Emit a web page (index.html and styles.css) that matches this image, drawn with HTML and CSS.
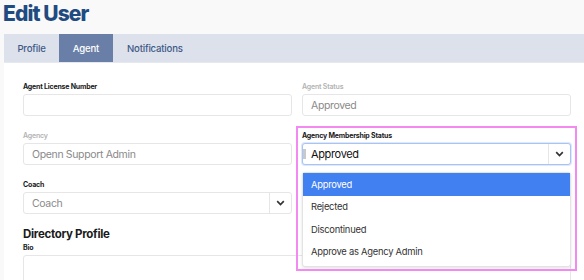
FILE: index.html
```html
<!DOCTYPE html>
<html>
<head>
<meta charset="utf-8">
<link rel="stylesheet" href="styles.css">
</head>
<body>
<h1 class="title">Edit User</h1>
<div class="tabs">
  <div class="tab">Profile</div>
  <div class="tab active">Agent</div>
  <div class="tab">Notifications</div>
</div>
<div class="panel">
  <div class="grid">
    <div class="field">
      <div class="label">Agent License Number</div>
      <div class="input"></div>
    </div>
    <div class="field">
      <div class="label disabled">Agent Status</div>
      <div class="input muted">Approved</div>
    </div>
    <div class="field">
      <div class="label disabled">Agency</div>
      <div class="input muted">Openn Support Admin</div>
    </div>
    <div class="field focus-field">
      <div class="label">Agency Membership Status</div>
      <div class="select focused">
        <span class="handle"></span>
        <span class="value">Approved</span>
        <span class="arrow"><svg width="9" height="6" viewBox="0 0 9 6"><path d="M1.2 1.2l3.3 3.3 3.3-3.3" fill="none" stroke="#333" stroke-width="1.7"/></svg></span>
      </div>
      <div class="menu">
        <div class="opt sel">Approved</div>
        <div class="opt">Rejected</div>
        <div class="opt">Discontinued</div>
        <div class="opt">Approve as Agency Admin</div>
      </div>
      <div class="highlight"></div>
    </div>
    <div class="field">
      <div class="label">Coach</div>
      <div class="select">
        <span class="value muted">Coach</span>
        <span class="arrow"><svg width="9" height="6" viewBox="0 0 9 6"><path d="M1.2 1.2l3.3 3.3 3.3-3.3" fill="none" stroke="#333" stroke-width="1.7"/></svg></span>
      </div>
    </div>
    <div class="field"></div>
  </div>
  <h2 class="section">Directory Profile</h2>
  <div class="label">Bio</div>
  <div class="textarea"></div>
</div>
</body>
</html>
```

FILE: styles.css
```css
* { box-sizing: border-box; }
html, body { margin: 0; padding: 0; }
body {
  width: 584px;
  height: 280px;
  overflow: hidden;
  background: #f9f9f9;
  font-family: Inter, "Noto Sans", sans-serif;
  color: #222;
}
.title {
  margin: 0;
  padding: 1px 0 0 3px;
  height: 34px;
  font-size: 21px;
  line-height: 26px;
  font-weight: 800;
  color: #1f4b80;
  letter-spacing: -0.9px;
}
.tabs {
  margin-left: 4px;
  height: 29px;
  background: #dde1ec;
  border-bottom: 1px solid #e6e8ef;
  display: flex;
}
.tab {
  height: 28px;
  padding: 0 14px;
  display: flex;
  align-items: center;
  font-size: 9.6px;
  letter-spacing: -0.2px;
  font-weight: 500;
  color: #3d5a86;
}
.tab.active {
  background: #6a7fa7;
  color: #fff;
  width: 54px;
  justify-content: center;
}
.tab:first-child { width: 55px; justify-content: center; }
.panel {
  margin-left: 4px;
  background: #fff;
  padding: 19px 13px 0 19px;
  height: 240px;
  overflow: hidden;
}
.grid {
  display: grid;
  grid-template-columns: 269px 269px;
  column-gap: 10px;
  row-gap: 15px;
}
.field { position: relative; }
.label {
  font-size: 7px;
  letter-spacing: -0.2px;
  line-height: 9px;
  font-weight: 700;
  color: #1a1a1a;
  margin-bottom: 3px;
}
.label.disabled { color: #b3b3b3; font-weight: 600; }
.input, .select {
  height: 22px;
  border: 1px solid #e6e6e6;
  border-radius: 3px;
  background: #fff;
  display: flex;
  align-items: center;
  padding-left: 8px;
  font-size: 10.5px;
  letter-spacing: -0.35px;
  color: #222;
}
.muted { color: #8a8a8a; }
.select { padding-left: 0; }
.select .value { flex: 1; padding-left: 8px; }
.select .arrow {
  width: 22px;
  height: 100%;
  border-left: 1px solid #e6e6e6;
  display: flex;
  align-items: center;
  justify-content: center;
}
.select.focused {
  border-color: #a8c3f5;
  box-shadow: 0 0 0 1px #dde8fb;
  position: relative;
}
.select.focused .value { padding-left: 8px; color: #111; font-size: 11px; }
.handle {
  position: absolute;
  left: 0;
  top: 5px;
  width: 3px;
  height: 10px;
  background: #c9c9c9;
}
.menu {
  position: absolute;
  left: 0;
  right: 0;
  top: 41px;
  background: #fff;
  border: 1px solid #e3e3e3;
  border-radius: 3px;
  box-shadow: 0 1px 3px rgba(0,0,0,0.12);
  padding-bottom: 3px;
  z-index: 2;
}
.opt {
  height: 22.5px;
  display: flex;
  align-items: center;
  padding-left: 8px;
  font-size: 9.4px;
  letter-spacing: -0.25px;
  color: #333;
}
.opt.sel { background: #4180f1; color: #fff; }
.highlight {
  position: absolute;
  left: -6px;
  right: -6px;
  top: -5px;
  height: 145px;
  border: 2px solid #f28af2;
  z-index: 3;
  pointer-events: none;
}
.section {
  margin: 13px 0 2px 0;
  font-size: 11.5px;
  letter-spacing: -0.3px;
  line-height: 14px;
  font-weight: 700;
  color: #1a1a1a;
}
.textarea {
  height: 60px;
  border: 1px solid #e6e6e6;
  border-radius: 3px;
  width: 548px;
}
```
